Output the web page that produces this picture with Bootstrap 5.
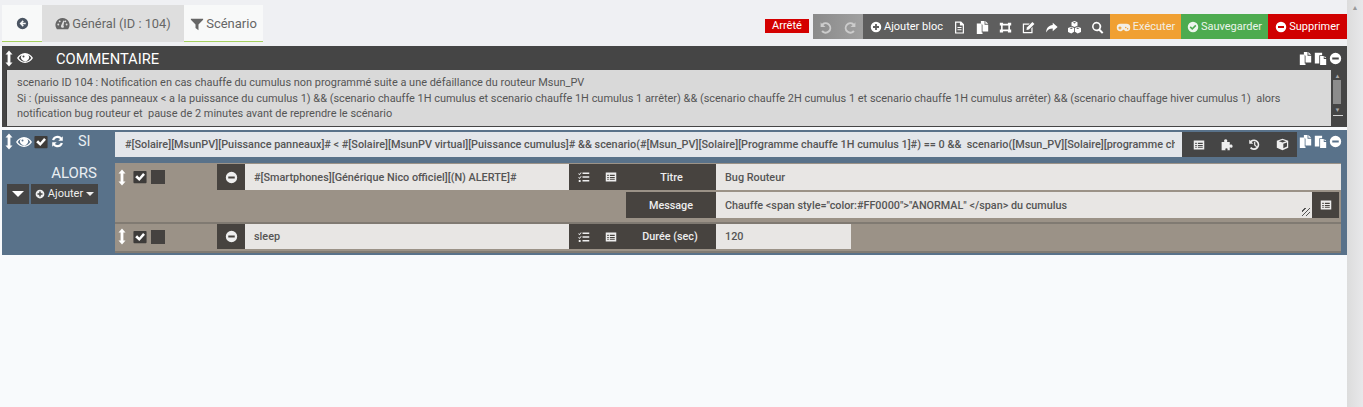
<!doctype html>
<html lang="fr"><head><meta charset="utf-8"><title>Scénario</title>
<link href="https://cdn.jsdelivr.net/npm/bootstrap@5.3.0/dist/css/bootstrap.min.css" rel="stylesheet">
<style>
html,body{height:407px;overflow:hidden;margin:0}
body{font-family:Roboto,"Liberation Sans",sans-serif;font-size:11px;background:#fff;color:#555}
.shell{height:407px}
.mainc{width:1347px;background:#f8fafc}
.pscroll{width:16px;background:linear-gradient(90deg,#dcdcdc,#e8e8ea);color:#999;font-size:7px;text-align:center;padding-top:3px}
.topz{height:46px;background:#eff0f3;padding:5px 0 0 2px}
.tabx{height:37px;font-size:12.8px;color:#666;border-bottom:1px solid #a5cf5e;background:#f8f9f9;gap:2px;padding-top:1px}
.tabx.tb0{width:40px;justify-content:center;color:#4b5563}
.tabx.tb1{width:142px;background:#dedede;border-bottom-color:#dedede;justify-content:center}
.tabx.tb2{width:79px;justify-content:center;font-size:13px}
.stat{background:#d40000;color:#fff;width:44px;height:14px;line-height:14px;text-align:center;font-size:11px;margin:14px 4px 0 0}
.tool{height:25px;margin-top:9px;color:#fff;white-space:nowrap;font-size:11px;gap:2px;padding-top:1px}
.tgrey{width:50px;color:#ccc;gap:12px;justify-content:center;background:linear-gradient(90deg,#8a8a8a,#a0a0a0)}
.tdark{background:#5e5e5e;width:247px;padding-left:7px;gap:10px}
.tor{background:#f0a032;width:71px;color:#f3efe5;justify-content:center}
.tgr{background:#4dab4f;width:87px;color:#ecf5ec;justify-content:center}
.trd{background:#d00000;width:79px;justify-content:center}
.ic{width:13px;height:13px;fill:currentColor;flex:none}
.ic.sm{width:12px;height:12px}
.ic.gm{width:15px;height:13px}
.ic.av{width:8px;height:17px}
.ic.ey{width:16px;height:16px}
.blkc{margin:0 0 3px 2px;height:81px;background:#454545;padding:0 4px}
.blkh{height:24px;color:#fff;font-size:14.7px;padding-left:0}
.blkh .ttl{margin-left:23px;padding-top:2px}
.rhead{gap:2px}
.txz{height:56px;background:#d9d9d9;width:1326px;border:1px solid #3a3a3a;border-width:0 0 0 1px;padding:5px 10px 0 10px;line-height:15.5px;font-size:10.95px;color:#555}
.sbar{width:11px;height:56px;margin-left:1px;background:#454545;position:relative;color:#aaa;font-size:6px;text-align:center}
.sthumb{position:absolute;left:1px;top:10px;width:8px;height:24px;background:#8c8c8c}
.sup{position:absolute;left:0;right:0;top:2px;line-height:7px}
.sdn{position:absolute;left:0;right:0;top:36px;line-height:7px}
.sln{position:absolute;left:1px;right:0;top:45px;height:1px;background:#d5d5d5}
.blks{margin-left:2px;height:125px;background:#59728a;padding:2px 0 0 0}
.lcol{width:113px}
.sirow{height:19px;color:#fff;padding-left:3px}
.lblb{color:#e9eef2;font-size:14.5px}
.siin{width:1067px;height:25px;background:#e3e6ea;padding:0 7px 0 10px;line-height:25px;font-weight:500;font-size:10.87px;color:#555}
.sclip{overflow:hidden;white-space:nowrap;height:25px}
.sibt{width:115px;height:25px;background:#454545;color:#eee;padding:0 8px 0 11px;justify-content:space-between}
.acts{width:1226px;height:90px;background:#9b9287;margin-top:6px}
.aline{height:28px;padding-top:1px}
.aline.l2{height:33px;border-bottom:2px solid #807a72;padding-top:1px}
.aline.l3{height:29px;padding-top:0;border-bottom:2px solid #807a72}
.ctl{height:26px;padding-left:3px;color:#fff}
.sqk{width:14px;height:14px;background:#454240;flex:none}
.ckb{width:14px;height:14px;margin-left:7px;margin-right:4px;flex:none}
.mcb{width:28px;height:26px;background:#47433f;color:#eee;margin-left:52px}
.inpz{background:#e8e6e4;height:26px;line-height:27px;padding-left:9px;font-weight:500;font-size:10.85px;color:#555;white-space:nowrap;overflow:hidden}
.dkl{background:#47433f;color:#eee;height:26px;font-weight:500;font-size:10.8px}
.dklt{padding-top:2px}
.l3 .inpz{height:25px;line-height:26px}
.l3 .dkl,.l3 .mcb,.l3 .ctl{height:25px}
.msgt{font-size:10.8px}
.addb{background:#454545;color:#eee;height:20px;font-size:11px;white-space:nowrap}
.trg{width:0;height:0;border-left:6px solid transparent;border-right:6px solid transparent;border-top:6px solid #fff}
.trs{width:0;height:0;border-left:4px solid transparent;border-right:4px solid transparent;border-top:4px solid #eee}
.rsz{position:absolute;right:2px;bottom:2px;width:8px;height:8px;background:repeating-linear-gradient(135deg,transparent 0 2px,#555 2px 3px)}
</style></head><body>
<svg width="0" height="0" style="position:absolute">
<defs>
<symbol id="i-bl" viewBox="0 0 16 16"><path d="M8 1a7 7 0 1 0 0 14A7 7 0 0 0 8 1zm4 8H8l1.600 1.600-1.300 1.300L4.400 8l3.900-3.900 1.300 1.300L8 7h4z"/></symbol>
<symbol id="i-ga" viewBox="0 0 16 16"><path d="M8 2a7.500 7.500 0 0 0-6.400 11.400l.4.600h12l.4-.6A7.500 7.500 0 0 0 8 2zM3.500 10a1 1 0 1 1 0-2 1 1 0 0 1 0 2zM5 6.700a1 1 0 1 1 0-2 1 1 0 0 1 0 2zm4.500 5a1.700 1.700 0 0 1-3.200-1l2.600-5.800 1 .3-.9 5.200a1.700 1.700 0 0 1 .5 1.300zm2.900-1.700a1 1 0 1 1 0-2 1 1 0 0 1 0 2zM11 6.700a1 1 0 1 1 0-2 1 1 0 0 1 0 2z"/></symbol>
<symbol id="i-fi" viewBox="0 0 16 16"><path d="M1 2h14v1L9.700 8.500V15L6.300 12.500v-4L1 3z"/></symbol>
<symbol id="i-av" viewBox="0 0 8 16"><path d="M4 0l3.500 4H5.400v8h2.100L4 16 .5 12h2.100V4H.5z"/></symbol>
<symbol id="i-ey" viewBox="0 0 16 16"><path d="M8 3C4.500 3 1.800 5.200 0 8c1.800 2.800 4.500 5 8 5s6.200-2.200 8-5c-1.800-2.800-4.500-5-8-5zm0 8.800C5.300 11.800 3.200 10.200 1.700 8c.8-1.200 1.800-2.200 3-2.900A4 4 0 1 0 11.300 5c1.200.8 2.200 1.800 3 3-1.500 2.200-3.600 3.800-6.300 3.800zM6.500 5.500a1 1 0 1 1 0 2 1 1 0 0 1 0-2z"/></symbol>
<symbol id="i-ck" viewBox="0 0 16 16"><path d="M1.500 1h13a1 1 0 0 1 1 1v12a1 1 0 0 1-1 1h-13a1 1 0 0 1-1-1V2a1 1 0 0 1 1-1z" fill="#3e3c3a"/><path d="M2.500 8.200l2.200-2.200 2.500 2.500 4.300-5 2.200 2L7.200 12.500z" fill="#fff"/></symbol>
<symbol id="i-re" viewBox="0 0 16 16"><path d="M14.500 1.500v5.500h-5.500l2.200-2.200A4.500 4.500 0 0 0 3.900 6.500L1.300 6A7 7 0 0 1 13 3zM1.500 14.500V9h5.500l-2.200 2.200a4.500 4.500 0 0 0 7.300-1.700l2.600.5A7 7 0 0 1 3 13z"/></symbol>
<symbol id="i-mi" viewBox="0 0 16 16"><path d="M8 1a7 7 0 1 0 0 14A7 7 0 0 0 8 1zm4 8.200H4V6.800h8z"/></symbol>
<symbol id="i-pl" viewBox="0 0 16 16"><path d="M8 1a7 7 0 1 0 0 14A7 7 0 0 0 8 1zm4 8.200H9.200V12H6.800V9.200H4V6.800h2.800V4h2.400v2.800H12z"/></symbol>
<symbol id="i-cc" viewBox="0 0 16 16"><path d="M8 1a7 7 0 1 0 0 14A7 7 0 0 0 8 1zm-1 11L3.500 8.500 5 7l2 2 4-4 1.500 1.500z"/></symbol>
<symbol id="i-un" viewBox="0 0 16 16"><path d="M2 1.500v6h6L5.400 5a4.500 4.500 0 1 1-.6 6.400l-2 1.800A7 7 0 1 0 3.500 3.300z"/></symbol>
<symbol id="i-rd" viewBox="0 0 16 16"><path d="M14 1.500v6H8L10.600 5a4.500 4.500 0 1 0 .6 6.400l2 1.800A7 7 0 1 1 12.500 3.300z"/></symbol>
<symbol id="i-fl" viewBox="0 0 16 16"><path d="M2.500 0.500h7.500l3.500 3.500v11.500h-11zm1.500 1.500v12h8V5.500H8.500V2zM5.500 7.500h5v1.200h-5zm0 2.800h5v1.200h-5z" fill-rule="evenodd"/></symbol>
<symbol id="i-cp" viewBox="0 0 16 16"><path d="M6 0h4.500v4.500H15V13H8V4.500L6 3z"/><path d="M11.500 0L15 3.500h-3.500z"/><path d="M1 3h6v2.500h0V14h1v2H1z"/></symbol>
<symbol id="i-pa" viewBox="0 0 16 16"><path d="M1 1h9v3H6.500v10H1z"/><path d="M7.500 5h4.500v3.500h3V16H7.500z"/><path d="M13 5l2 2.500h-2z"/></symbol>
<symbol id="i-ex" viewBox="0 0 16 16"><path d="M1 2h4v1.500h6V2h4v3.500h-1.500v5H15V14h-4v-1.500H5V14H1v-3.500h1.500v-5H1zm3.500 3.500v5h7v-5z" fill-rule="evenodd"/></symbol>
<symbol id="i-ed" viewBox="0 0 16 16"><path d="M1 3h8.500L8 4.500H2.500v9h9V9L13 7.500V15H1z"/><path d="M12.800 1.200L15.300 3.700 8.500 10.500 5.500 11l.5-3z"/></symbol>
<symbol id="i-sh" viewBox="0 0 16 16"><path d="M9.500 2L15.500 7.300l-6 5.200V9.300C6 9.300 3.500 10.500 1.500 14c0-5 3-8.500 8-9z"/></symbol>
<symbol id="i-cu" viewBox="0 0 16 16"><path d="M8 0l3.700 1.500v4.400L8 7.300 4.300 5.900V1.500zM4 7l3.500 1.500v4.800L4 15.500 0 13.500V8.500zm8 0l4 1.500v5l-4 2-3.500-2.200V8.500zM4 9.700L2 8.900 4 8.100l2 .8zm8 0l-2-.8 2-.8 2 .8zM8 3L6 2.100l2-.8 2 .8z" fill-rule="evenodd"/></symbol>
<symbol id="i-se" viewBox="0 0 16 16"><path d="M6.800 1a5.800 5.800 0 0 1 4.700 9.200l3.800 3.800-1.800 1.800-3.800-3.800A5.800 5.800 0 1 1 6.800 1zm0 2.200a3.600 3.600 0 1 0 0 7.200 3.600 3.600 0 0 0 0-7.200z" fill-rule="evenodd"/></symbol>
<symbol id="i-gm" viewBox="0 0 20 16"><path d="M6 3h8a5 5 0 0 1 0 10c-1.500 0-2.500-.7-3.300-2H9.300C8.500 12.300 7.500 13 6 13A5 5 0 0 1 6 3zM4.500 6.500v1.200H3.300v1.600h1.200v1.200h1.600V9.300h1.200V7.700H6.100V6.500zM13 7a1 1 0 1 0 0 2 1 1 0 0 0 0-2zm2.500 1.500a1 1 0 1 0 0 2 1 1 0 0 0 0-2z" fill-rule="evenodd"/></symbol>
<symbol id="i-ta" viewBox="0 0 16 16"><path d="M6 2h9v2H6zm0 5h9v2H6zm0 5h9v2H6zM1 3l1 1 2-2.500.8.700L2 5.500 0.300 3.700zM1 8l1 1 2-2.500.8.700L2 10.500.3 8.700zM1 12h2.500v2.500H1z"/></symbol>
<symbol id="i-li" viewBox="0 0 16 16"><path d="M1 2h14v12H1zm2 3v1.500h2V5zm0 3v1.500h2V8zm0 3v1h2v-1zm3.500-6v1.500H13V5zm0 3v1.500H13V8zm0 3v1H13v-1z" fill-rule="evenodd"/></symbol>
<symbol id="i-pz" viewBox="0 0 16 16"><path d="M2 5h3.500C4.500 3.500 5 1.500 7 1.500S9.500 3.500 8.500 5H12v3.500c1.500-1 3.500-.5 3.500 1.500S13.500 12.500 12 11.500V15H9c.8-1.500.3-2.500-1-2.500S6 13.500 7 15H2z"/></symbol>
<symbol id="i-hi" viewBox="0 0 16 16"><path d="M1.500 2v5h5L4.500 5a4.300 4.300 0 1 1-.4 6l-1.700 1.500A6.500 6.500 0 1 0 3 3.500zM7.500 4.500H9v3.700l2.300 2.300-1 1L7.500 8.800z"/></symbol>
<symbol id="i-cb" viewBox="0 0 16 16"><path d="M8 1l7 2.500v8.500L8 15l-7-3V3.500zM3.500 4L8 5.600 12.500 4 8 2.500zM9 7v5.500l4.500-1.900V5.400z" fill-rule="evenodd"/></symbol>
</defs></svg>
<div class="d-flex shell">
<div class="mainc">
  <div class="topz d-flex">
    <div class="tabx tb0 d-flex align-items-center"><svg class="ic"><use href="#i-bl"/></svg></div>
    <div class="tabx tb1 d-flex align-items-center"><svg class="ic" style="width:15px;height:15px"><use href="#i-ga"/></svg>Général (ID : 104)</div>
    <div class="tabx tb2 d-flex align-items-center"><svg class="ic" style="width:14px;height:14px"><use href="#i-fi"/></svg>Scénario</div>
    <div class="ms-auto d-flex align-items-start">
      <div class="stat">Arrêté</div>
      <div class="tool tgrey d-flex align-items-center"><svg class="ic"><use href="#i-un"/></svg><svg class="ic"><use href="#i-rd"/></svg></div>
      <div class="tool tdark d-flex align-items-center">
        <span class="d-flex align-items-center" style="gap:2px"><svg class="ic sm"><use href="#i-pl"/></svg>Ajouter bloc</span>
        <svg class="ic"><use href="#i-fl"/></svg><svg class="ic"><use href="#i-cp"/></svg><svg class="ic"><use href="#i-ex"/></svg><svg class="ic"><use href="#i-ed"/></svg><svg class="ic"><use href="#i-sh"/></svg><svg class="ic"><use href="#i-cu"/></svg><svg class="ic"><use href="#i-se"/></svg>
      </div>
      <div class="tool tor d-flex align-items-center"><svg class="ic gm"><use href="#i-gm"/></svg>Exécuter</div>
      <div class="tool tgr d-flex align-items-center"><svg class="ic sm"><use href="#i-cc"/></svg>Sauvegarder</div>
      <div class="tool trd d-flex align-items-center"><svg class="ic sm"><use href="#i-mi"/></svg>Supprimer</div>
    </div>
  </div>

  <div class="blkc">
    <div class="blkh d-flex align-items-center">
      <svg class="ic av" style="margin-left:-1px"><use href="#i-av"/></svg>
      <svg class="ic ey" style="margin-left:4px"><use href="#i-ey"/></svg>
      <span class="ttl">COMMENTAIRE</span>
      <span class="ms-auto d-flex rhead align-items-center" style="margin-right:1px"><svg class="ic"><use href="#i-cp"/></svg><svg class="ic"><use href="#i-pa"/></svg><svg class="ic"><use href="#i-mi"/></svg></span>
    </div>
    <div class="d-flex">
      <div class="txz">scenario ID 104 : Notification en cas chauffe du cumulus non programmé suite a une défaillance du routeur Msun_PV<br>Si : (puissance des panneaux &lt; a la puissance du cumulus 1) &amp;&amp; (scenario chauffe 1H cumulus et scenario chauffe 1H cumulus 1 arrêter) &amp;&amp; (scenario chauffe 2H cumulus 1 et scenario chauffe 1H cumulus arrêter) &amp;&amp; (scenario chauffage hiver cumulus 1)&nbsp; alors<br>notification bug routeur et&nbsp; pause de 2 minutes avant de reprendre le scénario</div>
      <div class="sbar"><span class="sup">▲</span><div class="sthumb"></div><span class="sdn">▼</span><div class="sln"></div></div>
    </div>
  </div>

  <div class="blks d-flex">
    <div class="lcol flex-none">
      <div class="sirow d-flex align-items-center">
        <svg class="ic av"><use href="#i-av"/></svg>
        <svg class="ic ey" style="margin-left:3px"><use href="#i-ey"/></svg>
        <svg class="ic" style="margin-left:2px;width:14px;height:14px"><use href="#i-ck"/></svg>
        <svg class="ic" style="margin-left:3px"><use href="#i-re"/></svg>
        <span class="lblb" style="margin-left:14px">SI</span>
      </div>
      <div class="text-end lblb" style="margin:13px 18px 0 0;line-height:18px;font-size:15px">ALORS</div>
      <div class="d-flex justify-content-end" style="margin:2px 17px 0 0;gap:2px">
        <div class="addb d-flex align-items-center justify-content-center" style="width:22px"><span class="trg"></span></div>
        <div class="addb d-flex align-items-center justify-content-center" style="width:67px;gap:3px"><svg class="ic" style="width:10px;height:10px"><use href="#i-pl"/></svg><span>Ajouter</span><span class="trs"></span></div>
      </div>
    </div>
    <div>
      <div class="d-flex">
        <div class="siin"><div class="sclip">#[Solaire][MsunPV][Puissance panneaux]# &lt; #[Solaire][MsunPV virtual][Puissance cumulus]# &amp;&amp; scenario(#[Msun_PV][Solaire][Programme chauffe 1H cumulus 1]#) == 0 &amp;&amp;&nbsp; scenario([Msun_PV][Solaire][programme ch</div></div>
        <div class="sibt d-flex align-items-center"><svg class="ic sm"><use href="#i-li"/></svg><svg class="ic"><use href="#i-pz"/></svg><svg class="ic"><use href="#i-hi"/></svg><svg class="ic"><use href="#i-cb"/></svg></div>
        <div class="d-flex align-items-center text-white" style="margin:-3px 0 3px 2px;width:46px;gap:2px"><svg class="ic"><use href="#i-cp"/></svg><svg class="ic"><use href="#i-pa"/></svg><svg class="ic"><use href="#i-mi"/></svg></div>
      </div>
      <div class="acts">
        <div class="aline d-flex">
          <div class="ctl d-flex align-items-center">
            <svg class="ic av"><use href="#i-av"/></svg>
            <svg class="ckb"><use href="#i-ck"/></svg>
            <div class="sqk"></div>
          </div>
          <div class="mcb d-flex align-items-center justify-content-center"><svg class="ic"><use href="#i-mi"/></svg></div>
          <div class="inpz" style="width:324px">#[Smartphones][Générique Nico officiel][(N) ALERTE]#</div>
          <div class="dkl d-flex align-items-center" style="width:147px"><svg class="ic sm" style="margin-left:9px"><use href="#i-ta"/></svg><svg class="ic sm" style="margin-left:15px"><use href="#i-li"/></svg><span class="flex-grow-1 text-center dklt" style="padding-left:10px">Titre</span></div>
          <div class="inpz flex-grow-1">Bug Routeur</div>
        </div>
        <div class="aline l2 d-flex">
          <div style="margin-left:511px;width:90px" class="dkl d-flex align-items-center justify-content-center"><span class="dklt">Message</span></div>
          <div class="inpz msgt position-relative" style="width:596px">Chauffe &lt;span style="color:#FF0000"&gt;"ANORMAL" &lt;/span&gt; du cumulus<span class="rsz"></span></div>
          <div class="dkl d-flex align-items-center justify-content-center" style="width:27px"><svg class="ic sm"><use href="#i-li"/></svg></div>
        </div>
        <div class="aline l3 d-flex">
          <div class="ctl d-flex align-items-center">
            <svg class="ic av"><use href="#i-av"/></svg>
            <svg class="ckb"><use href="#i-ck"/></svg>
            <div class="sqk"></div>
          </div>
          <div class="mcb d-flex align-items-center justify-content-center"><svg class="ic"><use href="#i-mi"/></svg></div>
          <div class="inpz" style="width:324px">sleep</div>
          <div class="dkl d-flex align-items-center" style="width:147px"><svg class="ic sm" style="margin-left:9px"><use href="#i-ta"/></svg><svg class="ic sm" style="margin-left:15px"><use href="#i-li"/></svg><span class="flex-grow-1 text-center dklt" style="padding-left:7px">Durée (sec)</span></div>
          <div class="inpz" style="width:135px">120</div>
        </div>
      </div>
    </div>
  </div>
</div>
<div class="pscroll">▲</div>
</div>
</body></html>
